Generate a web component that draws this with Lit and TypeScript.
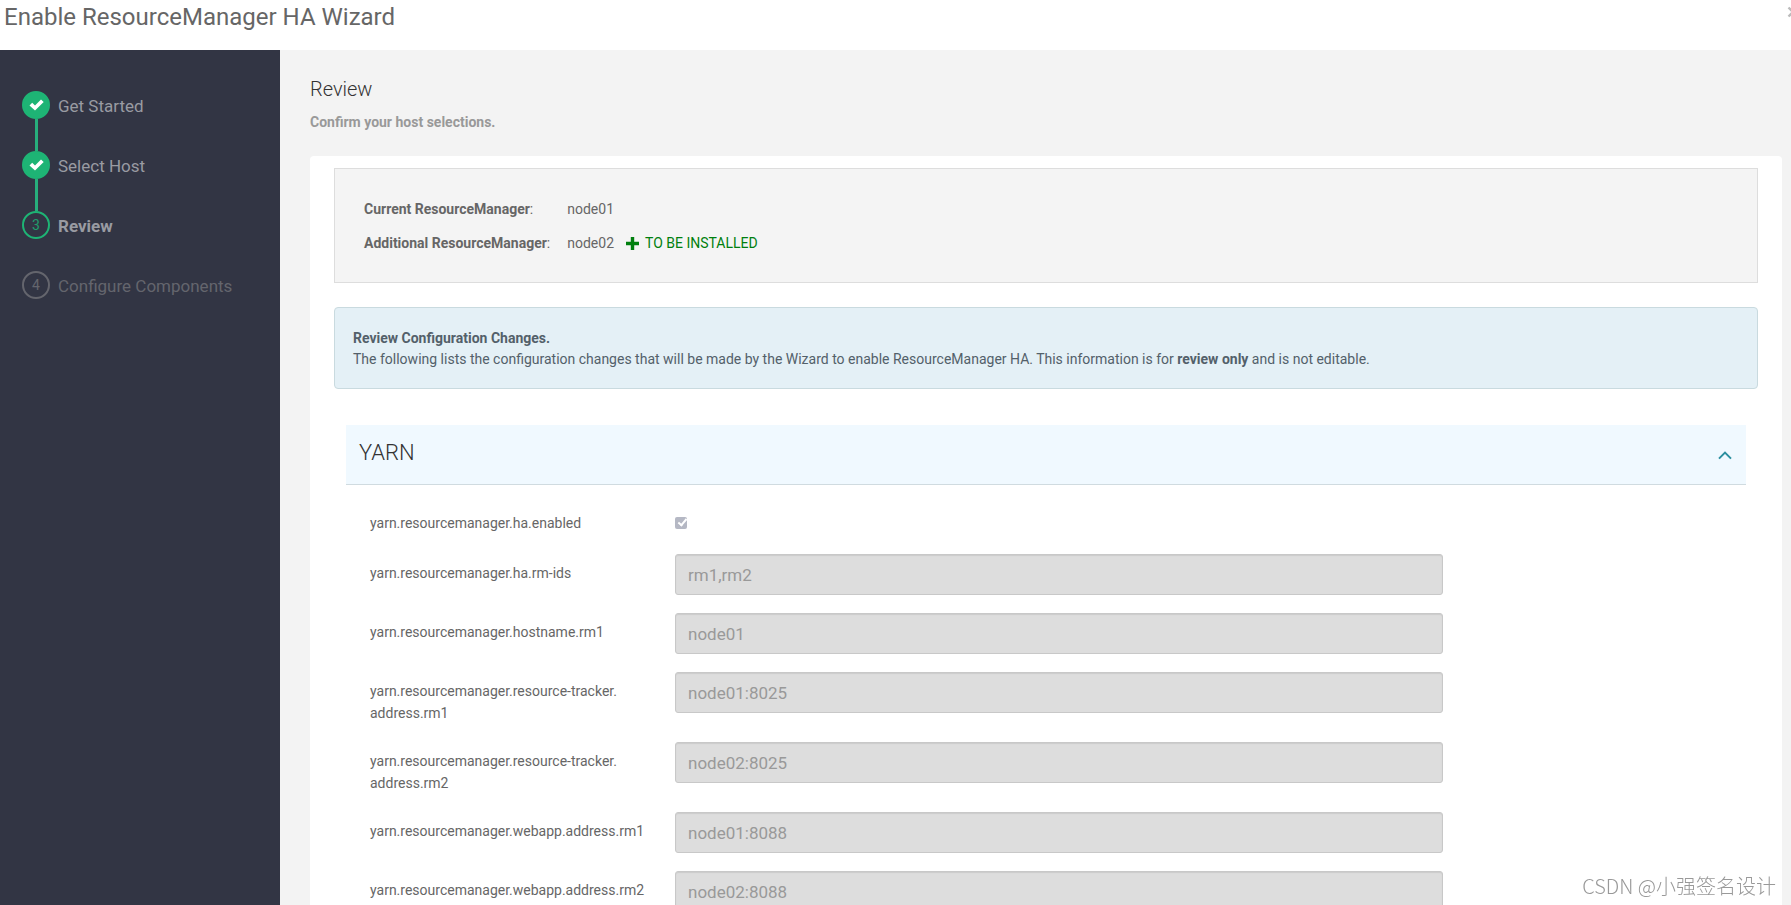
import { LitElement, html, css, svg, nothing } from "lit";
import { customElement, property } from "lit/decorators.js";
import { classMap } from "lit/directives/class-map.js";

type StepState = "done" | "current" | "pending";

interface Step {
  label: string;
  state: StepState;
}

interface ConfigRow {
  name: string[];
  value: string;
}

const STEPS: Step[] = [
  { label: "Get Started", state: "done" },
  { label: "Select Host", state: "done" },
  { label: "Review", state: "current" },
  { label: "Configure Components", state: "pending" },
];

const CONFIG: ConfigRow[] = [
  { name: ["yarn.resourcemanager.ha.rm-ids"], value: "rm1,rm2" },
  { name: ["yarn.resourcemanager.hostname.rm1"], value: "node01" },
  { name: ["yarn.resourcemanager.resource-tracker.", "address.rm1"], value: "node01:8025" },
  { name: ["yarn.resourcemanager.resource-tracker.", "address.rm2"], value: "node02:8025" },
  { name: ["yarn.resourcemanager.webapp.address.rm1"], value: "node01:8088" },
  { name: ["yarn.resourcemanager.webapp.address.rm2"], value: "node02:8088" },
];

const check = svg`<path d="M1.5 8.4 4.2 5.7 7 8.4 13 2.4 15.7 5.1 7 13.6Z" fill="currentColor"/>`;

@customElement("wizard-steps")
export class WizardSteps extends LitElement {
  @property({ attribute: false }) steps: Step[] = [];

  static styles = css`
    :host {
      display: block;
      background: #323544;
      padding: 41px 20px 0 22px;
      box-sizing: border-box;
    }
    .list {
      list-style: none;
      margin: 0;
      padding: 0;
    }
    .step {
      display: grid;
      grid-template-columns: 28px 1fr;
      grid-template-rows: 28px 32px;
      column-gap: 8px;
      color: #999ba2;
    }
    .badge {
      display: flex;
      align-items: center;
      justify-content: center;
      box-sizing: border-box;
      width: 28px;
      height: 28px;
      border-radius: 50%;
      border: 2px solid #1eb475;
      font-size: 14px;
      color: #1f9d6c;
    }
    .done .badge {
      background: #1eb475;
      color: #fff;
    }
    .rail {
      grid-row: 2;
      justify-self: center;
      width: 3px;
      background: #27ae7c;
    }
    .label {
      color: inherit;
      text-decoration: none;
      font-size: 17px;
      line-height: 30px;
      white-space: nowrap;
    }
    .current .label {
      font-weight: 700;
    }
    .pending {
      color: #64656d;
    }
    .pending .badge {
      border-color: #64656d;
      color: #64656d;
    }
  `;

  render() {
    return html`<ol class="list">
      ${this.steps.map((s, i) => {
        const done = s.state === "done";
        return html`<li class=${classMap({ step: true, [s.state]: true })}>
          <span class="badge"
            >${done
              ? html`<svg width="17" height="16" viewBox="0 0 17 16" aria-hidden="true">${check}</svg>`
              : i + 1}</span
          >
          <a class="label" href="#step${i + 1}">${s.label}</a>
          ${done ? html`<span class="rail"></span>` : nothing}
        </li>`;
      })}
    </ol>`;
  }
}

@customElement("config-panel")
export class ConfigPanel extends LitElement {
  @property() heading = "";
  @property({ attribute: false }) rows: ConfigRow[] = [];

  static styles = css`
    :host {
      display: block;
    }
    .toggle {
      display: flex;
      align-items: center;
      justify-content: space-between;
      width: 100%;
      height: 60px;
      box-sizing: border-box;
      padding: 0 13px;
      border: 0;
      border-bottom: 1px solid #d0dbe0;
      background: #f0f9ff;
      font: inherit;
      color: #333;
      text-align: left;
    }
    .name {
      font-size: 22px;
      line-height: 24px;
      padding-bottom: 4px;
    }
    .title {
      margin: 0;
      font: inherit;
      font-weight: 300;
    }
    .fields {
      display: flex;
      flex-direction: column;
      gap: 18px;
      padding: 19px 0 18px 24px;
    }
    .row {
      display: grid;
      grid-template-columns: 305px 43fr 17fr;
      align-items: start;
    }
    .key {
      padding: 8px 0 0;
      font-size: 14px;
      line-height: 22px;
      color: #666;
    }
    .check-row {
      min-height: 32px;
    }
    .tick {
      appearance: none;
      display: grid;
      width: 12px;
      height: 12px;
      margin: 13px 0 0;
      border-radius: 2px;
      background: #b5b8c4;
    }
    .tick:checked::before {
      content: "";
      width: 3px;
      height: 7px;
      margin: 0 0 0 5px;
      border: solid #fff;
      border-width: 0 2px 2px 0;
      transform: rotate(40deg);
    }
    .value {
      box-sizing: border-box;
      width: 100%;
      height: 41px;
      padding: 0 12px;
      border: 1px solid #c8c8c8;
      border-radius: 3px;
      background: #ddd;
      box-shadow: inset 0 1px 1px rgba(0, 0, 0, 0.08);
      font: inherit;
      font-size: 17px;
      color: #999;
    }
  `;

  render() {
    return html`
      <h3 class="title">
        <button class="toggle" type="button" aria-expanded="true">
          <span class="name">${this.heading}</span>
          <svg width="16" height="10" viewBox="0 0 16 10" aria-hidden="true">
            <path d="M2 8.6 8 2.6 14 8.6" fill="none" stroke="#2b8f9f" stroke-width="2" />
          </svg>
        </button>
      </h3>
      <div class="fields">
        <div class="row check-row">
          <label class="key" for="enabled">yarn.resourcemanager.ha.enabled</label>
          <input class="tick" id="enabled" type="checkbox" checked disabled />
        </div>
        ${this.rows.map(
          (r, i) => html`<div class="row">
            <label class="key" for="cfg${i}"
              >${r.name.map((part, n) => (n ? html`<wbr />${part}` : part))}</label
            >
            <input class="value" id="cfg${i}" type="text" .value=${r.value} disabled />
          </div>`,
        )}
      </div>
    `;
  }
}

@customElement("app-root")
export class AppRoot extends LitElement {
  static styles = css`
    :host {
      display: flex;
      flex-direction: column;
      position: relative;
      height: 100vh;
      overflow: hidden;
      background: #fff;
      font-family: Roboto, "Liberation Sans", sans-serif;
      font-size: 14px;
      line-height: 21px;
      color: #666;
    }
    .header {
      display: flex;
      justify-content: space-between;
      align-items: flex-start;
      flex: none;
      height: 50px;
      padding-left: 4px;
    }
    .wizard-title {
      margin: 0;
      font-size: 24px;
      line-height: 34px;
      font-weight: 400;
    }
    .close {
      flex: none;
      width: 12px;
      margin: 6px -8px 0 0;
      padding: 0;
      border: 0;
      background: none;
      line-height: 0;
    }
    .body {
      display: grid;
      grid-template-columns: 280px minmax(0, 1fr);
      flex: 1;
      min-height: 0;
    }
    .main {
      overflow-y: auto;
      scrollbar-width: none;
      background: #f3f3f3;
      padding: 27px 9px 0 30px;
    }
    .heading {
      margin: 0;
      font-size: 20px;
      line-height: 24px;
      font-weight: 300;
      color: #333;
    }
    .lead {
      margin: 11px 0 23px;
      font-weight: 700;
      color: #999;
    }
    .card {
      background: #fff;
      border-radius: 4px;
      padding: 12px 24px;
    }
    .well {
      display: grid;
      grid-template-columns: auto 1fr;
      column-gap: 17px;
      row-gap: 13px;
      margin: 0;
      padding: 30px 29px 28px;
      border: 1px solid #ddd;
      background: #f4f4f4;
    }
    .host {
      display: flex;
      gap: 12px;
      margin: 0;
    }
    .install {
      display: flex;
      align-items: center;
      gap: 6px;
      color: #007f0e;
    }
    .notice {
      margin: 24px 0 36px;
      padding: 20px 18px 18px;
      border: 1px solid #c9dadf;
      border-radius: 4px;
      background: #e4f0f6;
      color: #53606a;
    }
    .notice p {
      margin: 0;
    }
    .panel {
      margin: 0 12px;
    }
    .watermark {
      position: absolute;
      right: 15px;
      bottom: 7px;
      font-family: "Noto Sans CJK SC", sans-serif;
      font-size: 20px;
      line-height: 24px;
      font-weight: 300;
      color: #999;
    }
  `;

  render() {
    return html`
      <header class="header">
        <h1 class="wizard-title">Enable ResourceManager HA Wizard</h1>
        <button class="close" type="button" aria-label="Close">
          <svg width="12" height="12" viewBox="0 0 12 12" aria-hidden="true">
            <path d="M1.5 1.5 10.5 10.5M10.5 1.5 1.5 10.5" stroke="#bbb" stroke-width="2.4" />
          </svg>
        </button>
      </header>
      <div class="body">
        <wizard-steps .steps=${STEPS}></wizard-steps>
        <main class="main">
          <h2 class="heading">Review</h2>
          <p class="lead">Confirm your host selections.</p>
          <section class="card">
            <dl class="well">
              <dt><b>Current ResourceManager</b>:</dt>
              <dd class="host">node01</dd>
              <dt><b>Additional ResourceManager</b>:</dt>
              <dd class="host">
                node02
                <span class="install">
                  <svg width="13" height="13" viewBox="0 0 13 13" aria-hidden="true">
                    <path d="M4.8 0h3.4v4.8H13v3.4H8.2V13H4.8V8.2H0V4.8h4.8Z" fill="#007f0e" />
                  </svg>
                  TO BE INSTALLED
                </span>
              </dd>
            </dl>
            <div class="notice">
              <p><b>Review Configuration Changes.</b></p>
              <p>
                The following lists the configuration changes that will be made by the Wizard to enable
                ResourceManager HA. This information is for <b>review only</b> and is not editable.
              </p>
            </div>
            <config-panel class="panel" heading="YARN" .rows=${CONFIG}></config-panel>
          </section>
        </main>
      </div>
      <div class="watermark">CSDN @小强签名设计</div>
    `;
  }
}
